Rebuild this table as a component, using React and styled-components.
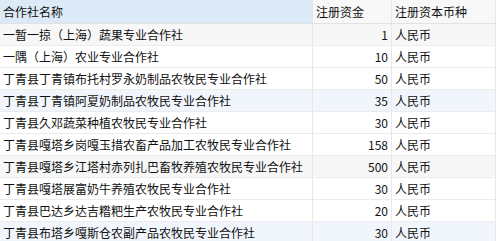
import React from 'react'
import styled, { createGlobalStyle } from 'styled-components'

const GlobalStyle = createGlobalStyle`
  html, body {
    margin: 0;
    padding: 0;
    background: #ffffff;
  }
  body {
    font-family: "Noto Sans CJK SC", "Liberation Sans", sans-serif;
    font-size: 12px;
    color: #111;
  }
`

const rows = [
  { name: '一暂一掠（上海）蔬果专业合作社', capital: 1, tone: 'grey' },
  { name: '一隅（上海）农业专业合作社', capital: 10 },
  { name: '丁青县丁青镇布托村罗永奶制品农牧民专业合作社', capital: 50 },
  { name: '丁青县丁青镇阿夏奶制品农牧民专业合作社', capital: 35, tone: 'blue' },
  { name: '丁青县久邓蔬菜种植农牧民专业合作社', capital: 30 },
  { name: '丁青县嘎塔乡岗嘎玉措农畜产品加工农牧民专业合作社', capital: 158 },
  { name: '丁青县嘎塔乡江塔村赤列扎巴畜牧养殖农牧民专业合作社', capital: 500, tone: 'grey' },
  { name: '丁青县嘎塔展富奶牛养殖农牧民专业合作社', capital: 30 },
  { name: '丁青县巴达乡达吉糌粑生产农牧民专业合作社', capital: 20 },
  { name: '丁青县布塔乡嘎斯仓农副产品农牧民专业合作社', capital: 30, tone: 'blue' },
]

const tones = { grey: '#f7f7f7', blue: '#f1f6fc', white: '#ffffff' }

const Table = styled.div`
  width: 496px;
  height: 241px;
  overflow: hidden;
  display: grid;
  grid-template-columns: 313px 79px 1fr;
  grid-auto-rows: 22px;
  grid-template-rows: 24px;
`

const Row = styled.div`
  display: contents;
`

const HeadCell = styled.div`
  background: ${p => (p.$active ? '#dce9f6' : '#f8f8f8')};
  border-bottom: 1px solid #e2e2e2;
  border-right: 1px solid #e6e6e6;
  display: flex;
  align-items: center;
  padding: 0 3px;
  white-space: nowrap;
  line-height: 1;
`

const Cell = styled.div`
  background: ${p => tones[p.$tone || 'white']};
  border-bottom: 1px solid #ececec;
  border-right: 1px solid #e8e8e8;
  display: flex;
  align-items: center;
  justify-content: ${p => (p.$num ? 'flex-end' : 'flex-start')};
  padding: 0 3px;
  white-space: nowrap;
  overflow: hidden;
  line-height: 1;
`

export default function App() {
  return (
    <>
      <GlobalStyle />
      <Table>
        <Row>
          <HeadCell $active>合作社名称</HeadCell>
          <HeadCell>注册资金</HeadCell>
          <HeadCell>注册资本币种</HeadCell>
        </Row>
        {rows.map(r => (
          <Row key={r.name}>
            <Cell $tone={r.tone}>{r.name}</Cell>
            <Cell $tone={r.tone} $num>{r.capital}</Cell>
            <Cell $tone={r.tone}>人民币</Cell>
          </Row>
        ))}
      </Table>
    </>
  )
}
